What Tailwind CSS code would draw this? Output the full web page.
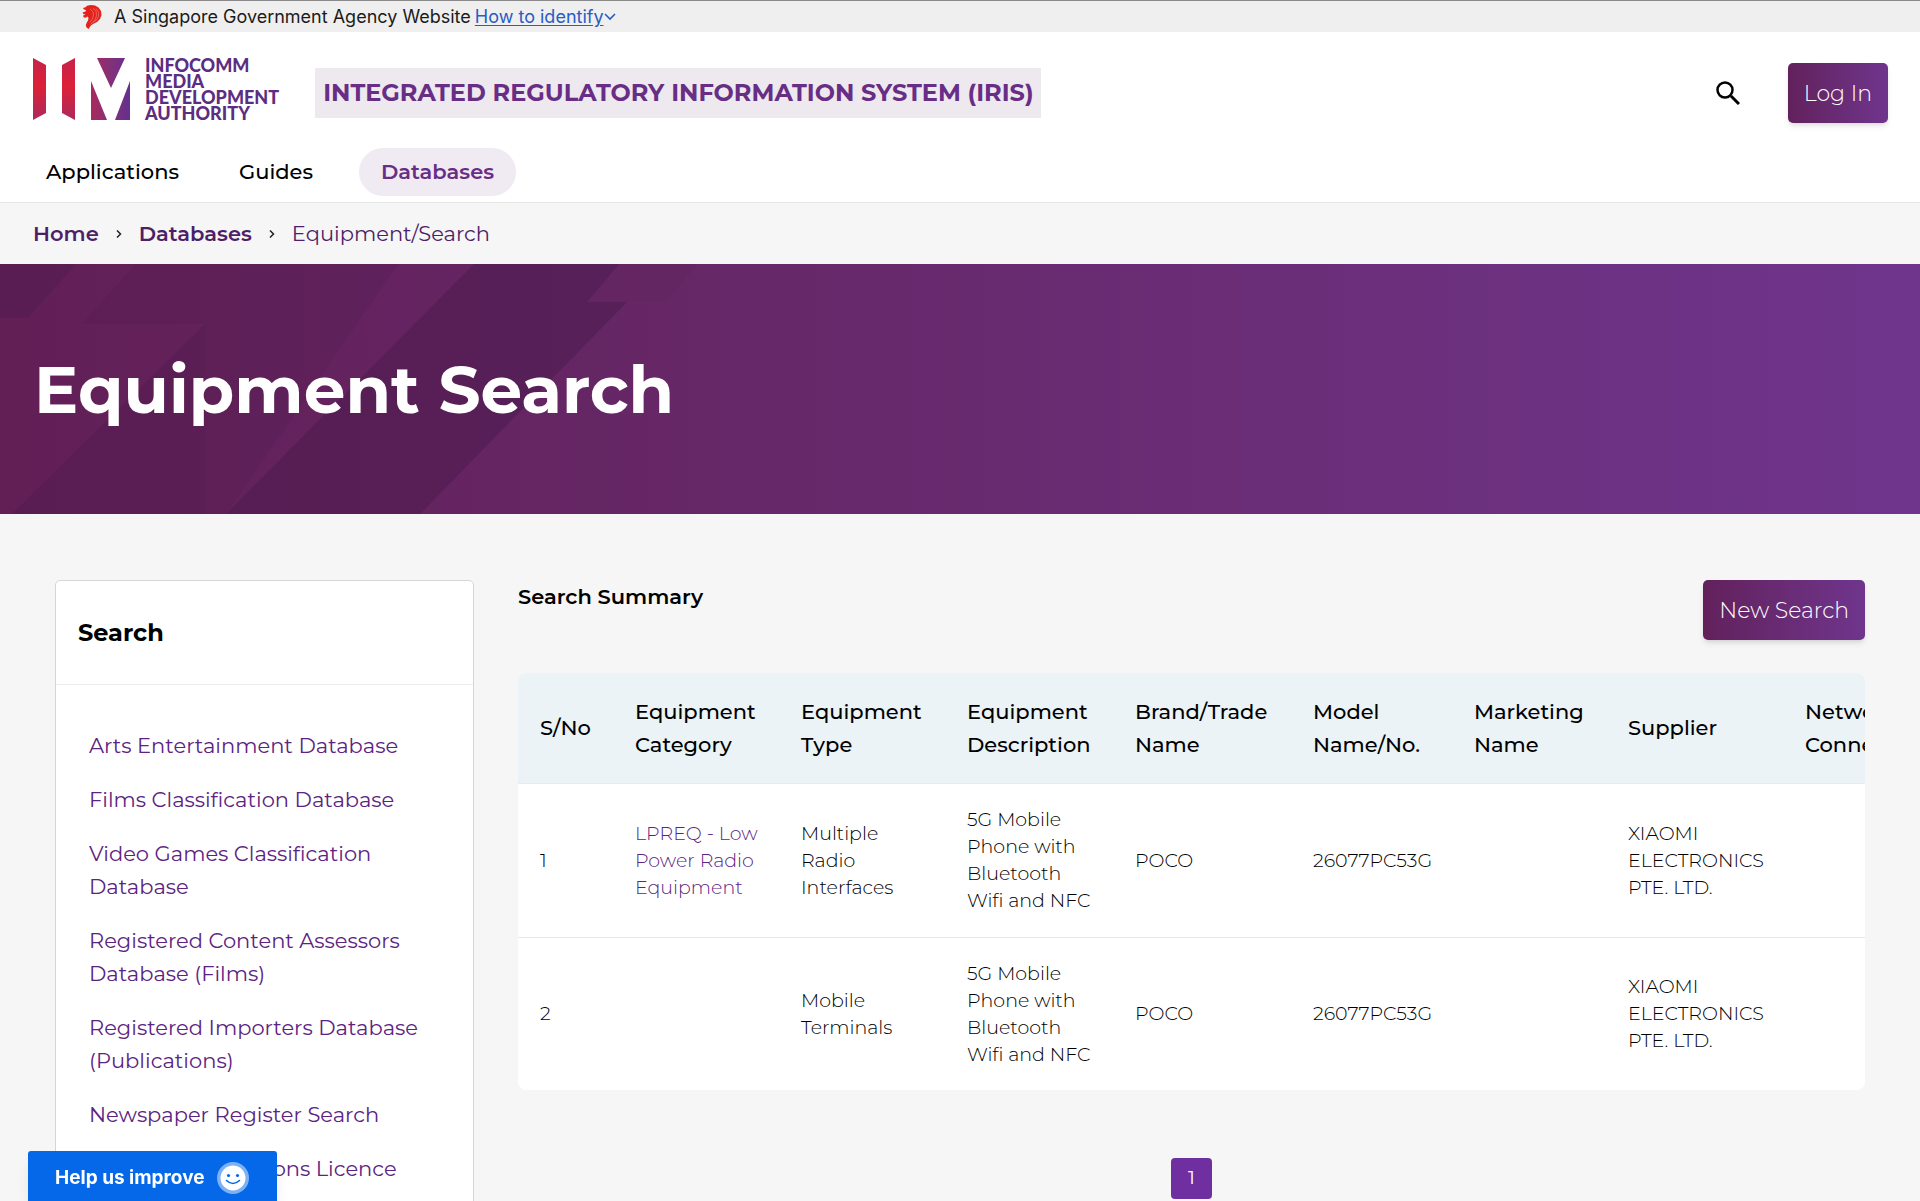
<!DOCTYPE html>
<html lang="en">
<head>
    <meta charset="UTF-8">
    <meta name="viewport" content="width=device-width, initial-scale=1.0">
    <title>Equipment Search | IRIS</title>
    <!-- Tailwind CSS CDN -->
    <script src="https://cdn.jsdelivr.net/npm/@tailwindcss/browser@4"></script>
    <style>
        body {
            font-family: Montserrat, Inter, 'Open Sans', sans-serif;
        }
    </style>
</head>
<body class="h-screen overflow-hidden bg-[#f6f6f6] text-black">

    <!-- Government masthead -->
    <div class="flex h-8 items-center border-t border-[#8a8a8a] bg-[#efefef] pl-[82px] font-[Inter] text-[18px] text-[#1b1b1b]">
        <svg class="mr-3 h-6 w-5" viewBox="0 0 20 24" aria-hidden="true">
            <path fill="#e3221c" d="M1 3 3.500 2.200 5 .8 9 0 13 .5 16.500 2.500 19 6 19.500 10 18 14 15 17 11 19 8.500 21 6.500 24 4.500 22.500 3.800 20 4.800 17.500 6 15.500 6.500 13.500 6 12 5 11.500 4 12.800 1.500 12.300 1.200 10.500 3.500 9.300 1.300 9 .6 7.600 3.500 6.500 4 5 2 4.600Z"/>
            <path d="M8 4q4 2 3.500 6T8 17.500M11 3q4.500 3 3.500 8t-6 8.500M14 3.500q4 3.500 2.500 8T11 17" fill="none" stroke="#f08a85" stroke-width=".6"/>
        </svg>
        <span>A Singapore Government Agency Website</span>
        <a href="#" class="ml-1 flex items-center text-[#2a5cc4]">
            <span class="underline underline-offset-2">How to identify</span>
            <svg class="h-3 w-3" viewBox="0 0 12 12" fill="none" stroke="currentColor" stroke-width="1.6" aria-hidden="true"><path d="m1 3 5 5 5-5"/></svg>
        </a>
    </div>

    <!-- Header -->
    <header class="border-b border-[#e6e6e6] bg-white">
        <div class="flex h-[116px] items-center px-8 pt-[6px]">
            <a href="#" class="flex items-center pb-2" aria-label="IMDA home">
                <svg class="h-[64px] w-[100px]" viewBox="0 0 100 64" aria-hidden="true">
                    <defs>
                        <linearGradient id="bar" x1="0" y1="0" x2="0" y2="1">
                            <stop offset="0" stop-color="#c5234a"/><stop offset=".45" stop-color="#dc2136"/><stop offset="1" stop-color="#ab2a5c"/>
                        </linearGradient>
                        <linearGradient id="em" gradientUnits="userSpaceOnUse" x1="58" y1="0" x2="98" y2="0">
                            <stop offset="0" stop-color="#ab2a5c"/><stop offset=".5" stop-color="#853078"/><stop offset="1" stop-color="#63308f"/>
                        </linearGradient>
                    </defs>
                    <path fill="url(#bar)" d="M1 1 14 8v48L1 63Z"/>
                    <path fill="url(#bar)" d="M43 1v62l-13-7V8Z"/>
                    <path fill="url(#em)" d="M65 1h28L79 31ZM59 24l16 39H59ZM98 24v39H83Z"/>
                </svg>
                <span class="ml-[13px] font-[Lato] text-[18px] leading-[16px] font-black text-[#5c2d82]">INFOCOMM<br>MEDIA<br>DEVELOPMENT<br>AUTHORITY</span>
            </a>
            <span class="ml-9 bg-[#eee8ef] px-2 py-2 text-[24px] leading-[34px] font-bold text-[#682e86]">INTEGRATED REGULATORY INFORMATION SYSTEM (IRIS)</span>
            <button type="button" class="mr-12 ml-auto" aria-label="Search">
                <svg class="h-6 w-6" viewBox="0 0 24 24" fill="none" stroke="#000" aria-hidden="true"><circle cx="9" cy="9" r="7.500" stroke-width="2.500"/><path d="m15 15 8 8" stroke-width="3"/></svg>
            </button>
            <button type="button" class="h-15 rounded-[5px] bg-linear-to-r from-[#62215c] to-[#6f358d] px-4 text-[22px] font-light text-white shadow-md">Log In</button>
        </div>
        <nav class="flex h-[54px] items-start gap-4 px-6 text-[21px] font-medium">
            <a href="#" class="rounded-full px-[22px] py-1 leading-[40px]">Applications</a>
            <a href="#" class="rounded-full px-[22px] py-1 leading-[40px]">Guides</a>
            <a href="#" class="ml-2 rounded-full bg-[#f0eaf2] px-[22px] py-1 leading-[40px] font-semibold text-[#682e86]">Databases</a>
        </nav>
    </header>

    <!-- Breadcrumb -->
    <nav class="flex h-[61px] items-center gap-[17px] px-[33px] text-[21px] text-[#4e1f68]" aria-label="Breadcrumb">
        <a href="#" class="font-semibold">Home</a>
        <svg class="h-2 w-[6px]" viewBox="0 0 6 8" fill="none" stroke="#222" stroke-width="1.5" aria-hidden="true"><path d="m1 .5 3.500 3.500L1 7.500"/></svg>
        <a href="#" class="font-semibold">Databases</a>
        <svg class="h-2 w-[6px]" viewBox="0 0 6 8" fill="none" stroke="#222" stroke-width="1.5" aria-hidden="true"><path d="m1 .5 3.500 3.500L1 7.500"/></svg>
        <span>Equipment/Search</span>
    </nav>

    <!-- Hero banner -->
    <section class="relative flex h-[250px] items-center overflow-hidden bg-linear-to-r from-[#621f56] via-[#682a6e] to-[#6f358d] px-[34px]">
        <svg class="absolute inset-0 h-full w-[960px]" viewBox="0 0 960 250" preserveAspectRatio="none" aria-hidden="true">
            <path fill="#4a1a4c" fill-opacity=".35" d="M0 0h76L28 54H0Z"/>
            <path fill="#4a1a4c" fill-opacity=".2" d="M136 0h262L226 250H12L205 60 82 60Z"/>
            <path fill="#4a1a4c" fill-opacity=".14" d="M205 60v190H12Z"/>
            <path fill="#4a1a4c" fill-opacity=".5" d="M474 0h145l-32 38h40L420 250H226Z"/>
            <path fill="#62235f" fill-opacity=".5" d="M619 0h78l-32 38h-78Z"/>
        </svg>
        <h1 class="relative text-[66px] font-bold text-white">Equipment Search</h1>
    </section>

    <main class="flex items-start gap-11 px-[55px] pt-[66px]">
        <!-- Sidebar -->
        <aside class="w-[419px] shrink-0 rounded-[5px] border border-[#d6d6d6] bg-white">
            <h2 class="border-b border-[#ececec] px-[22px] py-[34px] text-[24px] leading-[35px] font-bold">Search</h2>
            <ul class="flex flex-col gap-[21px] px-[33px] pt-[44px] pb-11 text-[21px] leading-[33px] text-[#5c2382]">
                <li><a href="#">Arts Entertainment Database</a></li>
                <li><a href="#">Films Classification Database</a></li>
                <li><a href="#">Video Games Classification Database</a></li>
                <li><a href="#">Registered Content Assessors Database (Films)</a></li>
                <li><a href="#">Registered Importers Database (Publications)</a></li>
                <li><a href="#">Newspaper Register Search</a></li>
                <li><a href="#">Telecommunications Licence</a></li>
            </ul>
        </aside>

        <!-- Results -->
        <section class="min-w-0 flex-1">
            <div class="flex items-start justify-between">
                <h2 class="text-[21px] leading-[33px] font-semibold">Search Summary</h2>
                <button type="button" class="h-15 rounded-[5px] bg-linear-to-r from-[#62215c] to-[#6f358d] px-4 text-[22px] font-light text-white shadow-md">New Search</button>
            </div>
            <div class="mt-[33px] overflow-hidden rounded-lg bg-white">
                <table class="w-[1520px] table-fixed text-left text-[19px] leading-[27px] font-light">
                    <colgroup>
                        <col class="w-[95px]"><col class="w-[166px]"><col class="w-[166px]"><col class="w-[168px]"><col class="w-[178px]"><col class="w-[161px]"><col class="w-[154px]"><col class="w-[177px]"><col>
                    </colgroup>
                    <thead class="bg-[#ebf3f7] text-[21px] leading-[33px]">
                        <tr class="h-[110px] border-b border-[#e6ecee]">
                            <th class="px-[22px] font-medium">S/No</th>
                            <th class="px-[22px] font-medium">Equipment Category</th>
                            <th class="px-[22px] font-medium">Equipment Type</th>
                            <th class="px-[22px] font-medium">Equipment Description</th>
                            <th class="px-[22px] font-medium">Brand/Trade Name</th>
                            <th class="px-[22px] font-medium">Model Name/No.</th>
                            <th class="px-[22px] font-medium">Marketing Name</th>
                            <th class="px-[22px] font-medium">Supplier</th>
                            <th class="px-[22px] font-medium">Network Connectivity</th>
                        </tr>
                    </thead>
                    <tbody>
                        <tr class="h-[154px] border-b border-[#e8e8e8]">
                            <td class="px-[22px]">1</td>
                            <td class="px-[22px] whitespace-nowrap"><a href="#" class="text-[#5c2382]">LPREQ - Low<br>Power Radio<br>Equipment</a></td>
                            <td class="px-[22px]">Multiple<br>Radio<br>Interfaces</td>
                            <td class="px-[22px]">5G Mobile<br>Phone with<br>Bluetooth<br>Wifi and NFC</td>
                            <td class="px-[22px]">POCO</td>
                            <td class="px-[22px]">26077PC53G</td>
                            <td class="px-[22px]"></td>
                            <td class="px-[22px]">XIAOMI<br>ELECTRONICS<br>PTE. LTD.</td>
                            <td class="px-[22px]"></td>
                        </tr>
                        <tr class="h-[153px]">
                            <td class="px-[22px]">2</td>
                            <td class="px-[22px]"></td>
                            <td class="px-[22px]">Mobile<br>Terminals</td>
                            <td class="px-[22px]">5G Mobile<br>Phone with<br>Bluetooth<br>Wifi and NFC</td>
                            <td class="px-[22px]">POCO</td>
                            <td class="px-[22px]">26077PC53G</td>
                            <td class="px-[22px]"></td>
                            <td class="px-[22px]">XIAOMI<br>ELECTRONICS<br>PTE. LTD.</td>
                            <td class="px-[22px]"></td>
                        </tr>
                    </tbody>
                </table>
            </div>
            <div class="mt-[68px] flex justify-center">
                <button type="button" class="h-[41px] w-[41px] rounded bg-[#702fa0] text-[19px] text-white">1</button>
            </div>
        </section>
    </main>

    <!-- Feedback tab -->
    <button type="button" class="fixed bottom-0 left-7 flex h-[50px] w-[249px] items-center gap-3 rounded-t-[3px] bg-[#0468e8] pt-1 pl-[27px] font-[Inter] text-[19px] font-bold text-white shadow-lg">
        Help us improve
        <svg class="h-8 w-8" viewBox="0 0 32 32" aria-hidden="true">
            <circle cx="16" cy="16" r="16" fill="#7db0f4"/>
            <circle cx="16" cy="16" r="12.5" fill="#fff"/>
            <circle cx="11.5" cy="13.5" r="1.6" fill="#0468e8"/><circle cx="20.5" cy="13.5" r="1.6" fill="#0468e8"/>
            <path d="M9.500 18.500q6.500 6 13 0" fill="none" stroke="#0468e8" stroke-width="1.600" stroke-linecap="round"/>
        </svg>
    </button>

</body>
</html>
